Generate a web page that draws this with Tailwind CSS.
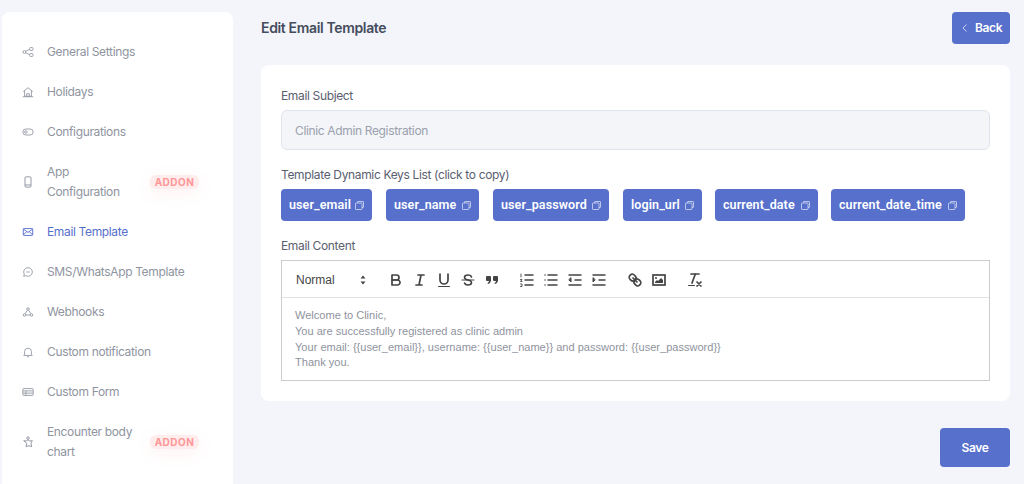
<!DOCTYPE html>
<html lang="en">
<head>
  <meta charset="UTF-8" />
  <title>Edit Email Template</title>
  <script src="https://cdn.jsdelivr.net/npm/@tailwindcss/browser@4"></script>
</head>
<body class="bg-[#f3f5fb] h-[484px] overflow-hidden font-['Inter',sans-serif] text-[12px] tracking-[-0.35px] text-[#5a6070]">
  <div class="flex items-start h-[484px]">
    <!-- sidebar -->
    <aside class="w-[231px] h-[480px] shrink-0 ml-[2px] mt-[12px] bg-white rounded-t-lg pt-[20px] text-[12px] leading-[20px] text-[#8f94a0]">
      <a class="flex items-center pl-[20px] py-[10px]">
        <svg class="w-[12px] h-[12px] mr-[13px] shrink-0" viewBox="0 0 14 14" fill="none" stroke="currentColor" stroke-width="1"><circle cx="2.800" cy="7" r="1.700"/><rect x="9" y="1.800" width="3.800" height="3.400" rx="1"/><rect x="9" y="8.800" width="3.800" height="3.400" rx="1"/><path d="M4.300 6.200 9 3.800M4.300 7.800 9 10.200"/></svg>
        <span>General Settings</span>
      </a>
      <a class="flex items-center pl-[20px] py-[10px]">
        <svg class="w-[12px] h-[12px] mr-[13px] shrink-0" viewBox="0 0 14 14" fill="none" stroke="currentColor" stroke-width="1"><path d="M1.500 6.500 7 2l5.500 4.500M3 5.500V12h8V5.500M5.500 12V9h3v3M1 12.500h12"/></svg>
        <span>Holidays</span>
      </a>
      <a class="flex items-center pl-[20px] py-[10px]">
        <svg class="w-[12px] h-[12px] mr-[13px] shrink-0" viewBox="0 0 14 14" fill="none" stroke="currentColor" stroke-width="1"><rect x="1" y="3.500" width="12" height="7" rx="3.500"/><circle cx="4.500" cy="7" r="1.500"/></svg>
        <span>Configurations</span>
      </a>
      <a class="flex items-center pl-[20px] py-[10px]">
        <svg class="w-[12px] h-[12px] mr-[13px] shrink-0" viewBox="0 0 14 14" fill="none" stroke="currentColor" stroke-width="1.100"><rect x="3.500" y="1" width="7" height="12" rx="1.300"/><path d="M3.500 10.500h7"/></svg>
        <span class="w-[90px] mr-[13px]">App Configuration</span>
        <span class="w-[49px] h-[14px] rounded-md bg-[#ffecec] text-[#ff9696] text-[10px] leading-[14px] font-bold tracking-[0.5px] text-center shadow-[0_4px_16px_rgba(255,120,120,0.1)]">ADDON</span>
      </a>
      <a class="flex items-center pl-[20px] py-[10px] text-[#5670cc]">
        <svg class="w-[12px] h-[12px] mr-[13px] shrink-0" viewBox="0 0 14 14" fill="none" stroke="currentColor" stroke-width="1.100"><rect x="1.500" y="3" width="11" height="8" rx="1"/><path d="m1.500 3.500 5.500 4 5.500-4M1.500 10.500 5.500 6.500M12.500 10.500l-4-4"/></svg>
        <span>Email Template</span>
      </a>
      <a class="flex items-center pl-[20px] py-[10px]">
        <svg class="w-[12px] h-[12px] mr-[13px] shrink-0" viewBox="0 0 14 14" fill="none" stroke="currentColor" stroke-width="1"><path d="M7 2a5 5 0 1 1-2.500 9.300L2 12l.7-2.500A5 5 0 0 1 7 2ZM5 7h4"/></svg>
        <span>SMS/WhatsApp Template</span>
      </a>
      <a class="flex items-center pl-[20px] py-[10px]">
        <svg class="w-[12px] h-[12px] mr-[13px] shrink-0" viewBox="0 0 14 14" fill="none" stroke="currentColor" stroke-width="1"><circle cx="7" cy="3.500" r="1.500"/><circle cx="3" cy="10.500" r="1.500"/><circle cx="11" cy="10.500" r="1.500"/><path d="M6.200 5 3.800 9M7.800 5l2.400 4M4.500 10.500h5"/></svg>
        <span>Webhooks</span>
      </a>
      <a class="flex items-center pl-[20px] py-[10px]">
        <svg class="w-[12px] h-[12px] mr-[13px] shrink-0" viewBox="0 0 14 14" fill="none" stroke="currentColor" stroke-width="1"><path d="M3 10V6.500a4 4 0 0 1 8 0V10l1 1H2l1-1ZM5.800 12.500h2.400"/></svg>
        <span>Custom notification</span>
      </a>
      <a class="flex items-center pl-[20px] py-[10px]">
        <svg class="w-[12px] h-[12px] mr-[13px] shrink-0" viewBox="0 0 14 14" fill="none" stroke="currentColor" stroke-width="1"><rect x="1" y="3" width="12" height="8" rx="0.800"/><path d="M1 5.700h12M1 8.300h12M4.500 5.700V11"/></svg>
        <span>Custom Form</span>
      </a>
      <a class="flex items-center pl-[20px] py-[10px]">
        <svg class="w-[12px] h-[12px] mr-[13px] shrink-0" viewBox="0 0 14 14" fill="none" stroke="currentColor" stroke-width="1.100"><circle cx="7" cy="2.500" r="1.500"/><path d="M7 4.500 9 5.800l3-.3-1.500 3 .8 4-3.300-1.200-3.300 1.200.8-4L2 5.500l3 .3 2-1.300Z"/></svg>
        <span class="w-[90px] mr-[13px]">Encounter body chart</span>
        <span class="w-[49px] h-[14px] rounded-md bg-[#ffecec] text-[#ff9696] text-[10px] leading-[14px] font-bold tracking-[0.5px] text-center shadow-[0_4px_16px_rgba(255,120,120,0.1)]">ADDON</span>
      </a>
    </aside>

    <!-- main -->
    <main class="w-[749px] ml-[28px] mt-[12px]">
      <div class="flex items-center justify-between h-[32px] mb-[21px]">
        <h1 class="text-[14px] font-semibold text-[#454c5c] -mt-[1px]">Edit Email Template</h1>
        <button class="flex items-center h-[32px] w-[58px] pl-[9px] rounded bg-[#5670cc] text-white text-[12px] font-semibold">
          <svg class="w-[8px] h-[10px] mr-[6px]" viewBox="0 0 8 10" fill="none" stroke="#c9d2f0"><path d="M5.500 1.500 2 5l3.500 3.500"/></svg>
          Back
        </button>
      </div>

      <div class="bg-white rounded-lg h-[336px] px-[20px] pt-[20px]">
        <label class="block leading-[20px] pt-[1px] h-[25px]">Email Subject</label>
        <div class="h-[40px] px-[13px] flex items-center bg-[#f3f5f9] border border-[#dfe3ec] rounded-md text-[#9ba0ac]"><span class="mt-[1px]">Clinic Admin Registration</span></div>
        <label class="block leading-[20px] mt-[14px] pt-[1px] h-[25px]">Template Dynamic Keys List (click to copy)</label>
        <div class="flex h-[32px] font-['Roboto',sans-serif] font-semibold text-white text-[12.500px] tracking-[0.1px]">
          <span class="w-[91px] mr-[14px] flex items-center justify-between px-[8px] rounded bg-[#5670cc]">user_email
            <svg class="w-[9px] h-[9px]" viewBox="0 0 9 9" fill="none" stroke="#d5dcf3" stroke-width="0.800"><rect x="0.500" y="2" width="6.500" height="6.500" rx="0.600"/><path d="M2.500 2V1a.5.5 0 0 1 .5-.5h5a.5.5 0 0 1 .5.5v5a.5.5 0 0 1-.5.5H7"/></svg></span>
          <span class="w-[93px] mr-[14px] flex items-center justify-between px-[8px] rounded bg-[#5670cc]">user_name
            <svg class="w-[9px] h-[9px]" viewBox="0 0 9 9" fill="none" stroke="#d5dcf3" stroke-width="0.800"><rect x="0.500" y="2" width="6.500" height="6.500" rx="0.600"/><path d="M2.500 2V1a.5.5 0 0 1 .5-.5h5a.5.5 0 0 1 .5.5v5a.5.5 0 0 1-.5.5H7"/></svg></span>
          <span class="w-[116px] mr-[14px] flex items-center justify-between px-[8px] rounded bg-[#5670cc]">user_password
            <svg class="w-[9px] h-[9px]" viewBox="0 0 9 9" fill="none" stroke="#d5dcf3" stroke-width="0.800"><rect x="0.500" y="2" width="6.500" height="6.500" rx="0.600"/><path d="M2.500 2V1a.5.5 0 0 1 .5-.5h5a.5.5 0 0 1 .5.5v5a.5.5 0 0 1-.5.5H7"/></svg></span>
          <span class="w-[79px] mr-[13px] flex items-center justify-between px-[8px] rounded bg-[#5670cc]">login_url
            <svg class="w-[9px] h-[9px]" viewBox="0 0 9 9" fill="none" stroke="#d5dcf3" stroke-width="0.800"><rect x="0.500" y="2" width="6.500" height="6.500" rx="0.600"/><path d="M2.500 2V1a.5.5 0 0 1 .5-.5h5a.5.5 0 0 1 .5.5v5a.5.5 0 0 1-.5.5H7"/></svg></span>
          <span class="w-[103px] mr-[13px] flex items-center justify-between px-[8px] rounded bg-[#5670cc]">current_date
            <svg class="w-[9px] h-[9px]" viewBox="0 0 9 9" fill="none" stroke="#d5dcf3" stroke-width="0.800"><rect x="0.500" y="2" width="6.500" height="6.500" rx="0.600"/><path d="M2.500 2V1a.5.5 0 0 1 .5-.5h5a.5.5 0 0 1 .5.5v5a.5.5 0 0 1-.5.5H7"/></svg></span>
          <span class="w-[134px] flex items-center justify-between px-[8px] rounded bg-[#5670cc]">current_date_time
            <svg class="w-[9px] h-[9px]" viewBox="0 0 9 9" fill="none" stroke="#d5dcf3" stroke-width="0.800"><rect x="0.500" y="2" width="6.500" height="6.500" rx="0.600"/><path d="M2.500 2V1a.5.5 0 0 1 .5-.5h5a.5.5 0 0 1 .5.5v5a.5.5 0 0 1-.5.5H7"/></svg></span>
        </div>
        <label class="block leading-[20px] mt-[14px] pt-[1px] h-[25px]">Email Content</label>

        <!-- editor -->
        <div class="border border-[#ccc]">
          <div class="flex items-center h-[37px] pl-[6px] pt-[2px] border-b border-[#e2e2e2] text-[#444]">
            <div class="w-[84px] mr-[12px] pl-[8px] flex items-center justify-between font-['Liberation_Sans',sans-serif] tracking-[0px] text-[12px]">
              <span>Normal</span>
              <svg class="w-[18px] h-[18px]" viewBox="0 0 18 18" fill="#444"><polygon points="6.500 10.500 9 13.500 11.500 10.500"/><polygon points="6.500 7.500 9 4.500 11.500 7.500"/></svg>
            </div>
            <div class="flex mr-[11px]">
              <span class="w-[24px] flex justify-center"><svg class="w-[18px] h-[18px]" viewBox="0 0 18 18" fill="none" stroke="#444" stroke-width="1.700" stroke-linecap="round" stroke-linejoin="round"><path d="M5 4h4.500A2.500 2.500 0 0 1 12 6.500 2.500 2.500 0 0 1 9.500 9H5V4Z"/><path d="M5 9h5.500a2.500 2.500 0 0 1 2.500 2.500 2.500 2.500 0 0 1-2.500 2.500H5V9Z"/></svg></span>
              <span class="w-[24px] flex justify-center"><svg class="w-[18px] h-[18px]" viewBox="0 0 18 18" fill="none" stroke="#444" stroke-width="1.700" stroke-linecap="round"><path d="M7 4h6M5 14h6M8 14l2-10"/></svg></span>
              <span class="w-[24px] flex justify-center"><svg class="w-[18px] h-[18px]" viewBox="0 0 18 18" fill="none" stroke="#444" stroke-width="1.700" stroke-linecap="round"><path d="M5 3v6a4 4 0 0 0 8 0V3"/><rect x="3" y="15" width="12" height="1" rx="0.500" fill="#444" stroke="none"/></svg></span>
              <span class="w-[24px] flex justify-center"><svg class="w-[18px] h-[18px]" viewBox="0 0 18 18" fill="none" stroke="#444" stroke-width="1.600" stroke-linecap="round"><path d="M12.500 6C12 4.500 10.500 4 9 4 7 4 5.500 5 5.500 6.500c0 1.500 1.500 2 3.500 2.500s3.500 1 3.500 2.500c0 1.500-1.500 2.500-3.500 2.500-1.500 0-3-.6-3.500-2"/><path d="M3 9h12" stroke-width="1"/></svg></span>
              <span class="w-[24px] flex justify-center"><svg class="w-[18px] h-[18px]" viewBox="0 0 18 18" fill="#444"><rect x="3" y="5" width="5" height="5" rx="1"/><rect x="10" y="5" width="5" height="5" rx="1"/><path d="M8 8.500c0 2.500-1 4-3 4.500l-.5-1c1.200-.4 1.700-1.500 1.700-3.500Z"/><path d="M15 8.500c0 2.500-1 4-3 4.500l-.5-1c1.200-.4 1.700-1.500 1.700-3.500Z"/></svg></span>
            </div>
            <div class="flex mr-[12px]">
              <span class="w-[24px] flex justify-center"><svg class="w-[18px] h-[18px]" viewBox="0 0 18 18" fill="none" stroke="#444" stroke-width="1.500" stroke-linecap="round"><path d="M7 4h8M7 9h8M7 14h8"/><path d="M3 3v3M2.500 8.500h1.500l-1.500 2H4M2.500 13h1.500v2.500H2.500" stroke-width="0.900"/></svg></span>
              <span class="w-[24px] flex justify-center"><svg class="w-[18px] h-[18px]" viewBox="0 0 18 18" fill="none" stroke="#444" stroke-width="1.500" stroke-linecap="round"><path d="M6 4h9M6 9h9M6 14h9M3 4h0M3 9h0M3 14h0"/></svg></span>
              <span class="w-[24px] flex justify-center"><svg class="w-[18px] h-[18px]" viewBox="0 0 18 18" fill="none" stroke="#444" stroke-width="1.500" stroke-linecap="round"><path d="M3 4h12M3 14h12M9 9h6"/><path d="M5 7v4L3 9Z" fill="#444" stroke-width="1"/></svg></span>
              <span class="w-[24px] flex justify-center"><svg class="w-[18px] h-[18px]" viewBox="0 0 18 18" fill="none" stroke="#444" stroke-width="1.500" stroke-linecap="round"><path d="M3 4h12M3 14h12M9 9h6"/><path d="M3 7v4l2-2Z" fill="#444" stroke-width="1"/></svg></span>
            </div>
            <div class="flex mr-[12px]">
              <span class="w-[24px] flex justify-center"><svg class="w-[18px] h-[18px]" viewBox="0 0 18 18" fill="none" stroke="#444" stroke-width="1.700" stroke-linecap="round"><path d="M7 7l4 4"/><path d="M8.900 4.577a3.476 3.476 0 0 1 .36 4.679A3.476 3.476 0 0 1 4.577 8.900C3.185 7.500 2.035 6.400 4.217 4.217S7.500 3.185 8.900 4.577Z"/><path d="M13.423 9.100a3.476 3.476 0 0 0-4.679-.36 3.476 3.476 0 0 0 .36 4.679c1.392 1.392 2.500 2.542 4.679.36S14.815 10.500 13.423 9.100Z"/></svg></span>
              <span class="w-[24px] flex justify-center"><svg class="w-[18px] h-[18px]" viewBox="0 0 18 18" fill="none" stroke="#444" stroke-width="1.700"><rect x="3" y="4" width="12" height="10"/><circle cx="6" cy="7" r="1" fill="#444" stroke="none"/><path d="M5 12v-1l2-2 1 1 3-3 2 2v3Z" fill="#444" stroke="none"/></svg></span>
            </div>
            <span class="w-[24px] flex justify-center"><svg class="w-[18px] h-[18px]" viewBox="0 0 18 18" fill="none" stroke="#444" stroke-width="1.700" stroke-linecap="round"><path d="M5 3h8M6 12l3.350-9M11 11l4 4M15 11l-4 4"/><rect x="2" y="14" width="7" height="1" rx="0.500" fill="#444" stroke="none"/></svg></span>
          </div>
          <div class="h-[82px] pl-[13px] pt-[10px] font-['Liberation_Sans',sans-serif] tracking-[0px] text-[11.050px] leading-[15.800px] text-[#8f939e]">
            <p>Welcome to Clinic,</p>
            <p>You are successfully registered as clinic admin</p>
            <p>Your email: {{user_email}}, username: {{user_name}} and password: {{user_password}}</p>
            <p>Thank you.</p>
          </div>
        </div>
      </div>

      <div class="flex justify-end mt-[27px]">
        <button class="w-[70px] h-[39px] rounded bg-[#5670cc] text-white text-[12px] font-semibold">Save</button>
      </div>
    </main>
  </div>
</body>
</html>
